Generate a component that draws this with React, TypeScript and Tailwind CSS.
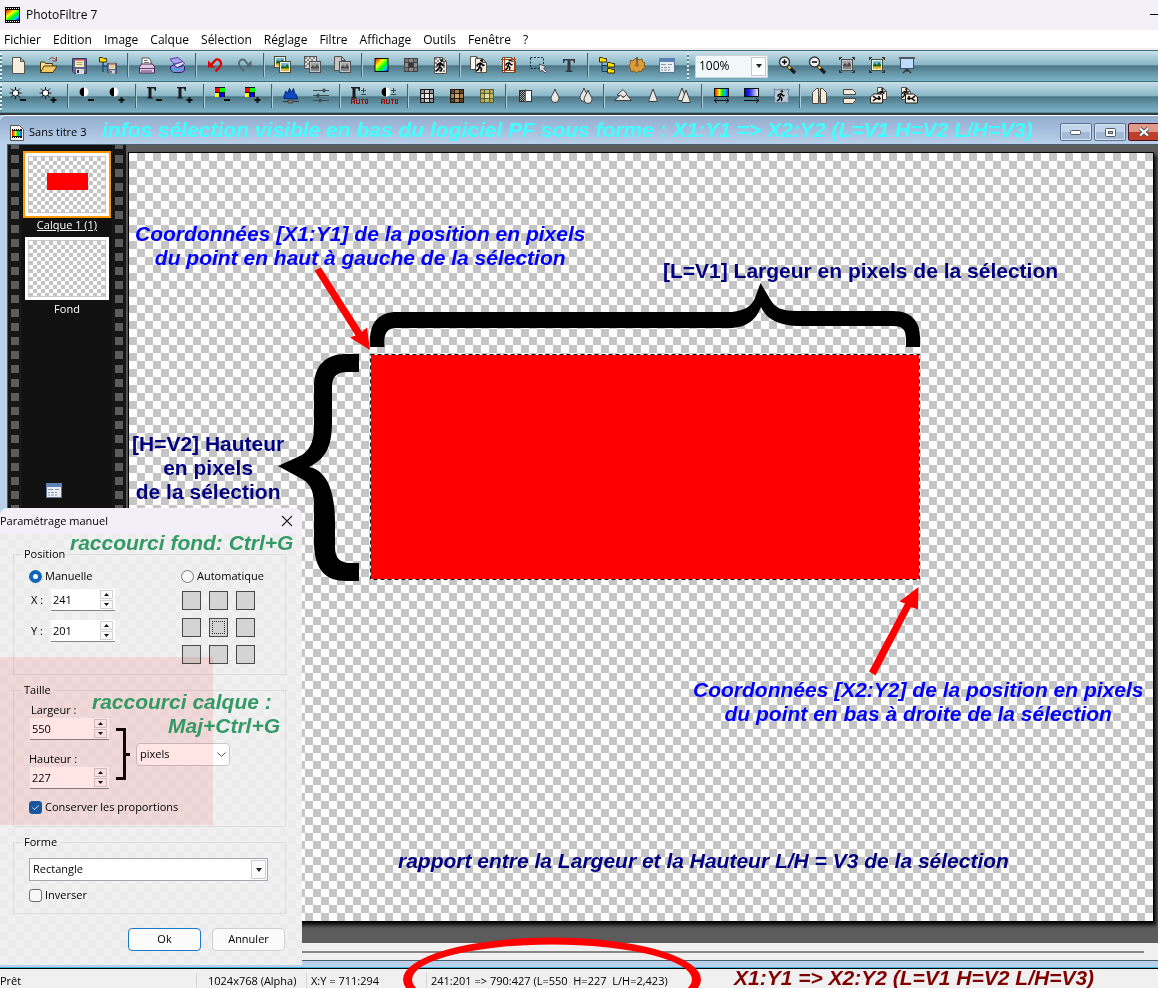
import { useState } from "react";
import type { ReactNode } from "react";

const UI = "font-['Open_Sans','Noto_Sans',sans-serif]";
const NOTE = "absolute whitespace-nowrap font-['Liberation_Sans',sans-serif] text-[21px] font-bold";

/* ---------- icon parts, all on a 20x20 grid ---------- */

const Page = ({ x = 3, y = 2, w = 12, h = 16, fill = "#f6efe0" }: { x?: number; y?: number; w?: number; h?: number; fill?: string }) => (
  <path transform="translate(0.5 0.5)" d={`M${x} ${y}h${w - 4}l4 4v${h - 4}h-${w}z M${x + w - 4} ${y}v4h4`} fill={fill} stroke="#5a554c" />
);

const Man = ({ x = 0, y = 0, s = 1 }: { x?: number; y?: number; s?: number }) => (
  <g transform={`translate(${x} ${y}) scale(${s})`} stroke="#000" strokeWidth="1.6" fill="none">
    <circle cx="6.5" cy="1.5" r="1.3" fill="#000" stroke="none" />
    <path d="M6 3.5L4.5 7.5L6.5 9.5L6 12.5M4.5 7.5L3.5 10.5L1 12M5.5 4L2.5 5.5L2 7.5M6 4L8 6.5L9.5 6" />
  </g>
);

const Photo = ({ x, y, gray }: { x: number; y: number; gray?: boolean }) => (
  <g transform={`translate(${x} ${y})`}>
    <path d="M0 0h12v12H0z" fill={gray ? "#4b4f50" : "#4a4a30"} />
    <path d="M1 1h10v10H1z" fill={gray ? "#c4c4c4" : "#f4f1dc"} />
    <path d="M2 2h8v5H2z" fill={gray ? "#a4a4a4" : "#6fbbe6"} />
    <path d="M2 8V6l2-2 2 2 2-3 2 3v2z" fill={gray ? "#4f4f4f" : "#1c6a18"} />
    <path d="M2 7.5h8V10H2z" fill={gray ? "#858585" : "#e3b93c"} />
  </g>
);

const Checks = ({ x, y, n, m }: { x: number; y: number; n: number; m: number }) => (
  <g fill="#8b8b8b">
    {Array.from({ length: n * m }, (_, i) => [i % n, Math.floor(i / n)])
      .filter(([a, b]) => (a + b) % 2 === 0)
      .map(([a, b]) => (
        <rect key={`${a}-${b}`} x={x + a * 2} y={y + b * 2} width="2" height="2" />
      ))}
  </g>
);

const Floppy = ({ x, y, s = 1 }: { x: number; y: number; s?: number }) => (
  <g transform={`translate(${x} ${y}) scale(${s})`}>
    <path d="M0.5 0.5h14v15h-12l-2-2z" fill="#66638e" stroke="#3a3858" />
    <rect x="3" y="1" width="9" height="8" fill="#f5eeb4" />
    <path d="M3 1h9v1.5H3z" fill="#c04a50" />
    <path d="M4.5 4.500h6M4.500 6.500h6" stroke="#a9a078" />
    <rect x="4" y="11" width="8" height="5" fill="#d8d8e0" />
    <rect x="5" y="12" width="2" height="3" fill="#333" />
  </g>
);

const GRID_STARTS = [0, 4, 9];
const GRID_SIZES = [3, 4, 3];

const Grid3 = ({ a, b, c, line = "#1a1a1a" }: { a: string; b: string; c: string; line?: string }) => (
  <g>
    <rect x="3" y="3" width="14" height="14" fill={line} />
    {[0, 1, 2, 3, 4, 5, 6, 7, 8].map((i) => {
      const col = i % 3;
      const row = Math.floor(i / 3);
      return (
        <rect
          key={i}
          x={4 + GRID_STARTS[col]}
          y={4 + GRID_STARTS[row]}
          width={GRID_SIZES[col]}
          height={GRID_SIZES[row]}
          fill={i === 4 ? c : i % 2 ? b : a}
        />
      );
    })}
  </g>
);

const Sun = () => (
  <g stroke="#111">
    <path d="M6.500 1v12M0.500 7h12M2 2.500l9 9M11 2.500l-9 9" />
    <circle cx="6.500" cy="7" r="3.200" fill="#fff" />
  </g>
);

const Half = () => (
  <g>
    <circle cx="7" cy="6" r="4.500" fill="#fff" />
    <path d="M7 1.500a4.500 4.500 0 0 0 0 9z" fill="#000" />
  </g>
);

const Gamma = () => <path d="M2 1h9v4h-1L9 2.500H6.500V11l1.500 1v.500H2V12l1.500-1V2.500L2 2z" fill="#1c1c1c" />;

const Quads = () => (
  <g>
    <path d="M2 1h10v10H2z" fill="#111" />
    <path d="M2 2h5v4H2z" fill="#f00" />
    <path d="M7 2h5v4H7z" fill="#0f0" />
    <path d="M2 7h4v4H2z" fill="#ff0" />
    <path d="M7 7h4v4H7z" fill="#00f" />
  </g>
);

const Minus = () => <path d="M11 14h6" stroke="#111" strokeWidth="2" />;
const Plus = () => <path d="M11.500 14h6M14.500 11v6" stroke="#111" strokeWidth="2" />;

const Auto = () => (
  <g>
    <path d="M14.500 2v5M12 4.500h5M12 8.500h5" stroke="#444" />
    <path d="M2.500 18v-4.500h3V18M2.500 16h3M7.500 13v4.500h3V13M12 13.500h3M13.500 13v5M16.500 13.500h2v4h-2z" fill="none" stroke="#8e1010" />
  </g>
);

const Drop = ({ x = 0, y = 0 }: { x?: number; y?: number }) => (
  <path transform={`translate(${x} ${y})`} d="M10 3C9 7 6 9.500 6 12.500a4 4 0 0 0 8 0C14 9.500 11 7 10 3z" fill="#e9e7e2" stroke="#3e3e3e" />
);

const Cone = ({ x = 0, y = 0 }: { x?: number; y?: number }) => (
  <path transform={`translate(${x} ${y})`} d="M10 3L6 13.500v2h8v-2z" fill="#e9e7e2" stroke="#3e3e3e" />
);

const Lens = ({ plus }: { plus?: boolean }) => (
  <g>
    <path d="M11 11l7 7" stroke="#1a1a1a" strokeWidth="3.200" />
    <path d="M11.500 11.500l2 2" stroke="#f2d23c" strokeWidth="2.400" />
    <circle cx="7.500" cy="7" r="5" fill="#eef3f4" stroke="#3a3a3a" strokeWidth="1.400" />
    <path d={plus ? "M5 7h5M7.500 4.500v5" : "M5 7h5"} stroke="#000" strokeWidth="1.500" />
  </g>
);

const Corners = ({ gray }: { gray?: boolean }) => (
  <g>
    <Photo x={4} y={4} gray={gray} />
    <path d="M2.500 5V2.500H5M2.500 2.500l2 2M15 2.500h2.500V5M17.500 2.500l-2 2M2.500 15v2.500H5M2.500 17.500l2-2M17.500 15v2.500H15M17.500 17.500l-2-2" fill="none" stroke="#333" />
  </g>
);

const FormIcon = () => (
  <g>
    <rect x="2.500" y="3.500" width="15" height="14" fill="#e9edf4" stroke="#5b7492" />
    <path d="M2 3h16v4H2z" fill="#5c83b5" />
    <path d="M4 9.500h5M11 9.500h4M4 12.500h2M7 12.500h3M11 12.500h2M4 15h2M7 15h3M11 15h2" stroke="#8a95a8" />
  </g>
);

const YellowTab = ({ x, y }: { x: number; y: number }) => (
  <path transform={`translate(${x} ${y})`} d="M0.500 0.500h3l1 1h3v3.500h-7z" fill="#ffe000" stroke="#3a3300" />
);

/* ---------- toolbars ---------- */

type Tool = { name: string; art: ReactNode } | null;

const FILE_TOOLS: Tool[] = [
  { name: "Nouveau", art: <Page /> },
  {
    name: "Ouvrir",
    art: (
      <g>
        <path d="M1.500 17V7h4l1 1.500h7V11" fill="#f7dc8c" stroke="#4c3b10" />
        <path d="M1.500 17.500L5 11h13l-4 6.500z" fill="#f3cb63" stroke="#4c3b10" />
        <path d="M10 5c2-3 5-3 7 0M17.500 2v4h-4" fill="none" stroke="#8c3a2c" />
      </g>
    ),
  },
  { name: "Enregistrer", art: <Floppy x={3} y={3} /> },
  {
    name: "Enregistrer sous",
    art: (
      <g>
        <path d="M4 6v11M4 11h4" stroke="#234a78" strokeWidth="1.500" />
        <YellowTab x={0} y={2} />
        <Floppy x={8} y={8} s={0.66} />
      </g>
    ),
  },
  null,
  {
    name: "Imprimer",
    art: (
      <g>
        <path d="M5 10V3h7l2 3v4z" fill="#fff" stroke="#555" />
        <path d="M7 5.500h4M7 7.500h5" stroke="#777" />
        <path d="M2.500 12l2-3h11l2 3v6h-15z" fill="#e3c8e2" stroke="#4b2c50" />
        <path d="M3 13.500h14M4 16h11" stroke="#693c70" />
      </g>
    ),
  },
  {
    name: "Numériser",
    art: (
      <g>
        <path d="M3 4l8-1.500L16 7l-9 2z" fill="#a9a5f2" stroke="#5a3aa0" />
        <path d="M6 10l10-3.500 1.500 2L10 13z" fill="#dfe4ff" stroke="#5a3aa0" />
        <path d="M3.500 11.500l3-1.500 4 2.500 6-2 1 1v4l-3 2h-8l-3-2.500z" fill="#8d84d6" stroke="#2d2566" />
        <path d="M5 14.500h9" stroke="#27b0e8" strokeWidth="1.500" />
      </g>
    ),
  },
  null,
  {
    name: "Annuler",
    art: (
      <g>
        <path d="M10.500 16.500L15 11.500C18 7.500 13.500 2 10 5.500L6 10" fill="none" stroke="#e00000" strokeWidth="2.200" />
        <path d="M3 5.500v7h7z" fill="#e00000" />
      </g>
    ),
  },
  {
    name: "Rétablir",
    art: (
      <g>
        <path d="M9 16.500L5 11.500C2 7.500 6.500 2 10 5.500L13 9.500" fill="none" stroke="#56666c" strokeWidth="1.800" />
        <path d="M16.500 5.500v6.500H10z" fill="#56666c" />
      </g>
    ),
  },
  null,
  { name: "Copier", art: <><Photo x={1} y={1} /><Photo x={6} y={6} /></> },
  { name: "Coller", art: <><rect x="1.500" y="1.500" width="12" height="12" fill="#ddd" stroke="#555" /><Checks x={2} y={2} n={5} m={5} /><Photo x={6} y={6} gray /></> },
  { name: "Coller dans", art: <><Page x={1} y={1} w={11} h={14} fill="#c3c5c5" /><Photo x={6} y={6} gray /></> },
  null,
  { name: "Mode RVB", art: <rect x="4" y="3.500" width="13" height="13" fill="url(#rainbow)" stroke="#111" /> },
  { name: "Mode indexé", art: <Grid3 a="#777" b="#8d8d8d" c="#353535" line="#444" /> },
  { name: "Transparence", art: <><Page fill="#eee" /><Checks x={4} y={3} n={5} m={7} /><Man x={4} y={4} /></> },
  null,
  { name: "Dupliquer", art: <><Page x={1} y={1} w={10} h={13} fill="#fff" /><Page x={6} y={3} w={11} h={14} /><Man x={6} y={4} /></> },
  { name: "Taille de l'image", art: <><Page x={3} y={2} w={13} h={15} /><Man x={5} y={4} s={0.9} /><path d="M2 4.500h15M2 15.500h15M5.500 2v16M15.500 2v16" stroke="#a34216" /></> },
  {
    name: "Sélection",
    art: (
      <g>
        <path d="M1.500 2.500h13v11h-13z" fill="none" stroke="#102a38" strokeDasharray="2 1.500" />
        <path d="M10 9l1 8 2-2 3 3 1.500-1.500-3-3 2-2z" fill="#ddd" stroke="#555" />
      </g>
    ),
  },
  {
    name: "Texte",
    art: <path d="M4 4h12v4h-1l-1-2.500h-2.500V15l2 1v1h-7v-1l2-1V5.500H6L5 8H4z" fill="#343b40" />,
  },
  null,
  {
    name: "Explorateur",
    art: (
      <g>
        <path d="M5 6v10.500h5M5 10.500h5" fill="none" stroke="#123c68" />
        <YellowTab x={2} y={2} />
        <YellowTab x={10} y={7} />
        <YellowTab x={10} y={13} />
      </g>
    ),
  },
  {
    name: "Automatisation",
    art: (
      <g>
        <path d="M10 3l2 2 3-1 .5 3 2.500 1-1 3 1.500 2-3 1-1 2.500-3-.5-2 2-2.500-2-3 .5-.5-3L2 11l1.500-2.500L3 5.500l3 .5 1.500-2z" fill="#d99e3b" stroke="#8a5a18" />
        <path d="M10 2v7" stroke="#555" strokeWidth="1.500" />
        <circle cx="10" cy="10" r="2" fill="#a8701f" />
      </g>
    ),
  },
  { name: "Préférences", art: <FormIcon /> },
];

const ZOOM_TOOLS: Tool[] = [
  { name: "Zoom +", art: <Lens plus /> },
  { name: "Zoom -", art: <Lens /> },
  { name: "Ajuster", art: <Corners gray /> },
  { name: "Taille réelle", art: <Corners /> },
  {
    name: "Plein écran",
    art: (
      <g>
        <path d="M10 14l-4 4M10 14l4 4M10 14v3" stroke="#333" strokeWidth="1.300" />
        <rect x="3.500" y="3.500" width="13" height="10" fill="#bfdcff" stroke="#3d4f63" />
        <path d="M2 3h16" stroke="#54585c" strokeWidth="2" />
      </g>
    ),
  },
];

const ADJUST_TOOLS: Tool[] = [
  { name: "Luminosité -", art: <><Sun /><Minus /></> },
  { name: "Luminosité +", art: <><Sun /><Plus /></> },
  null,
  { name: "Contraste -", art: <><Half /><Minus /></> },
  { name: "Contraste +", art: <><Half /><Plus /></> },
  null,
  { name: "Gamma -", art: <><Gamma /><Minus /></> },
  { name: "Gamma +", art: <><Gamma /><Plus /></> },
  null,
  { name: "Saturation -", art: <><Quads /><Minus /></> },
  { name: "Saturation +", art: <><Quads /><Plus /></> },
  null,
  {
    name: "Niveaux",
    art: (
      <g>
        <path d="M3 12.500V10l2-5 2 2 1.500-4.500 2 4 2-4 1 4.500 2 2 1 4z" fill="#0a48c8" stroke="#03256c" />
        <path d="M2 15.500h16" stroke="#333" />
        <path d="M7 14h5v3H7z" fill="#777" stroke="#333" strokeWidth="0.700" />
      </g>
    ),
  },
  {
    name: "Réglages",
    art: (
      <g stroke="#3f4d55" fill="#3f4d55">
        <path d="M2 4.500h16M2 9.500h16M2 14.500h16" />
        <path d="M12 3h2v3h-2zM6 8h2v3H6zM8 13h2v3H8z" strokeWidth="0.700" />
      </g>
    ),
  },
  null,
  { name: "Niveaux automatiques", art: <><Gamma /><Auto /></> },
  { name: "Contraste automatique", art: <><Half /><Auto /></> },
  null,
  { name: "Niveaux de gris", art: <Grid3 a="#8c8c8c" b="#cfcfcf" c="#eee" /> },
  { name: "Sépia", art: <Grid3 a="#5c4526" b="#a9824d" c="#d3aa6c" line="#20150a" /> },
  { name: "Vieille photo", art: <Grid3 a="#a9a45a" b="#bdbb6e" c="#e6e592" line="#5c5c30" /> },
  null,
  {
    name: "Estomper",
    art: (
      <g>
        <rect x="4.500" y="4.500" width="12" height="11" fill="#fff" stroke="#333" />
        <path d="M5 5h5v10H5z" fill="#aaa" />
        <path d="M5 5.500h5M6 6.500h5M5 7.500h5M6 8.500h5M5 9.500h5M6 10.500h5M5 11.500h5M6 12.500h5M5 13.500h5M6 14.500h5" stroke="#222" strokeDasharray="1 1" />
        <path d="M10.500 3v14" stroke="#a34a28" />
      </g>
    ),
  },
  { name: "Adoucir", art: <Drop /> },
  { name: "Adoucir plus", art: <><Drop x={-1} y={-1} /><Drop x={3} y={1} /></> },
  null,
  {
    name: "Relief",
    art: (
      <g fill="#e9e7e2" stroke="#3e3e3e">
        <path d="M4 9l6-5.500L14 8l-3 3z" />
        <path d="M1.500 14.500l6-5.500 3 2.500 3-3 5 6z" />
      </g>
    ),
  },
  { name: "Netteté", art: <Cone /> },
  { name: "Netteté plus", art: <><Cone x={-1} y={-1} /><Cone x={3} y={1} /></> },
  null,
  { name: "Dégradé", art: <><rect x="3.500" y="2.500" width="14" height="8" fill="url(#hues)" stroke="#111" /><path d="M3 14.500h15M6 12l-3 2.500 3 2.500M15 12l3 2.500-3 2.500" fill="none" stroke="#111" /></> },
  { name: "Dégradé bicolore", art: <><rect x="3.500" y="2.500" width="14" height="8" fill="url(#blues)" stroke="#111" /><path d="M3 14.500h15M15 12l3 2.500-3 2.500" fill="none" stroke="#111" /></> },
  { name: "Contour", art: <><path d="M3 3l3 1 4-1 4 1 4-1-1 4 1 3-1 3 1 4-4-1-4 1-3-1-4 1 1-4-1-3 1-3z" fill="#b9cad8" stroke="#6a8192" /><Man x={5} y={4} s={0.9} /></> },
  null,
  {
    name: "Symétrie horizontale",
    art: (
      <g fill="#f4eadb" stroke="#4a4640">
        <path d="M9.500 2.500v15h-6v-11l4-4z" />
        <path d="M11.500 2.500v15h6v-11l-4-4z" />
      </g>
    ),
  },
  {
    name: "Symétrie verticale",
    art: (
      <g fill="#f4eadb" stroke="#4a4640">
        <path d="M4.500 3.500h9l3 3v2h-12z" />
        <path d="M4.500 12.500h12v2l-3 3h-9z" />
      </g>
    ),
  },
  {
    name: "Rotation gauche",
    art: (
      <g>
        <Page x={8} y={1} w={9} h={12} />
        <Man x={8} y={2} s={0.800} />
        <path d="M1.500 11l3-3h9v9h-12z" fill="#f6efe0" stroke="#222" />
        <path d="M4 10l3 2.500h5M4 15l3-2.500M10 10v4" stroke="#000" strokeWidth="1.600" />
      </g>
    ),
  },
  {
    name: "Rotation droite",
    art: (
      <g>
        <Page x={2} y={1} w={9} h={12} />
        <Man x={2} y={2} s={0.800} />
        <path d="M6.500 8h8l4 3v6h-12z" fill="#f6efe0" stroke="#222" />
        <path d="M16 10l-3 2.500H8M16 15l-3-2.500M10 10v4" stroke="#000" strokeWidth="1.600" />
      </g>
    ),
  },
];

const MENUS = ["Fichier", "Edition", "Image", "Calque", "Sélection", "Réglage", "Filtre", "Affichage", "Outils", "Fenêtre", "?"];

function Grip() {
  return <div className="h-[27px] w-[2px] bg-[repeating-linear-gradient(#e4f2f7_0_2px,#55818f_2px_4px)]" />;
}

function ToolRow({ tools }: { tools: Tool[] }) {
  return (
    <div className="flex items-center pb-[2px]">
      {tools.map((tool, i) =>
        tool ? (
          <button key={i} title={tool.name} aria-label={tool.name} className="flex h-6 w-[30px] items-center justify-center hover:bg-white/25">
            <svg width="20" height="20" viewBox="0 0 20 20" fill="none">
              {tool.art}
            </svg>
          </button>
        ) : (
          <div key={i} className="flex w-2 justify-center">
            <div className="h-6 w-[2px] border-l border-[#3f6370] bg-[#a9ccd8]" />
          </div>
        )
      )}
    </div>
  );
}

const BAR =
  "flex h-[31px] items-center border-t border-[#426d7b] bg-[linear-gradient(#c9e0e8,#86b4c5_47%,#4b7585_49%,#5d8b9c_65%,#7db3c8)]";

/* ---------- dialog controls ---------- */

function Spinner({ id, value, onChange, className }: { id: string; value: number; onChange: (v: number) => void; className: string }) {
  return (
    <div className={`flex h-[22px] items-center border-b border-[#868686] bg-white pr-[2px] ${className}`}>
      <input
        id={id}
        value={value}
        onChange={(e) => onChange(Number(e.target.value) || 0)}
        className="min-w-0 flex-1 bg-transparent pl-[2px] text-[11px] leading-4 outline-none"
      />
      <div className="flex flex-col gap-px">
        <button aria-label="Plus" onClick={() => onChange(value + 1)} className="flex h-[9px] w-[13px] items-center justify-center border border-[#d0d0d0] bg-[#fafafa]">
          <svg width="5" height="3" viewBox="0 0 5 3"><path d="M0 3L2.500 0L5 3z" fill="#111" /></svg>
        </button>
        <button aria-label="Moins" onClick={() => onChange(value - 1)} className="flex h-[9px] w-[13px] items-center justify-center border border-[#d0d0d0] bg-[#fafafa]">
          <svg width="5" height="3" viewBox="0 0 5 3"><path d="M0 0L2.500 3L5 0z" fill="#111" /></svg>
        </button>
      </div>
    </div>
  );
}

function Tick({ label, checked, onChange }: { label: string; checked: boolean; onChange: (v: boolean) => void }) {
  return (
    <label className="flex items-center gap-[3px] leading-4">
      <span className="grid">
        <input
          type="checkbox"
          checked={checked}
          onChange={(e) => onChange(e.target.checked)}
          className="col-start-1 row-start-1 size-[13px] appearance-none rounded-[3px] border border-[#6e6e6e] bg-[#f8f8f8] checked:border-[#1a5fb0] checked:bg-[#1a5fb0]"
        />
        {checked && (
          <svg width="13" height="13" viewBox="0 0 13 13" className="pointer-events-none col-start-1 row-start-1">
            <path d="M3.500 6.500l2 2.200L9.500 4.500" fill="none" stroke="#fff" />
          </svg>
        )}
      </span>
      {label}
    </label>
  );
}

function Radio({ label, checked, onChange }: { label: string; checked: boolean; onChange: () => void }) {
  return (
    <label className="flex items-center gap-[3px] leading-4">
      <input
        type="radio"
        name="mode"
        checked={checked}
        onChange={onChange}
        className="size-[13px] appearance-none rounded-full border border-[#777] bg-[#f8f8f8] checked:border-4 checked:border-[#0f66b8] checked:bg-white"
      />
      {label}
    </label>
  );
}

function SelectionDialog() {
  const [mode, setMode] = useState("manual");
  const [x, setX] = useState(241);
  const [y, setY] = useState(201);
  const [width, setWidth] = useState(550);
  const [height, setHeight] = useState(227);
  const [keep, setKeep] = useState(true);
  const [invert, setInvert] = useState(false);

  return (
    <div
      role="dialog"
      aria-label="Paramétrage manuel"
      className="absolute top-[508px] left-0 h-[457px] w-[302px] overflow-hidden rounded-t-lg bg-[#f0f0f0] bg-[repeating-conic-gradient(#ececec_0_25%,#f1f1f1_0_50%)] bg-[length:16px_16px]"
    >
      <div className="flex h-[26px] items-center justify-between bg-[#f3eff8] pr-[9px]">
        <span>Paramétrage manuel</span>
        <button aria-label="Fermer">
          <svg width="12" height="12" viewBox="0 0 12 12"><path d="M1 1l10 10M11 1L1 11" stroke="#222" strokeWidth="1.100" /></svg>
        </button>
      </div>

      <div className="pt-3 pr-4 pl-[13px]">
        <fieldset className="flex h-[129px] border border-[#dcdcdc] pl-[15px]">
          <legend className="-ml-2 px-[3px] leading-4">Position</legend>
          <div className="w-[152px] pt-[6px]">
            <Radio label="Manuelle" checked={mode === "manual"} onChange={() => setMode("manual")} />
            <div className="mt-[5px] flex items-center">
              <label htmlFor="pos-x" className="w-[22px] pl-[2px]">X :</label>
              <Spinner id="pos-x" value={x} onChange={setX} className="w-16" />
            </div>
            <div className="mt-[9px] flex items-center">
              <label htmlFor="pos-y" className="w-[22px] pl-[2px]">Y :</label>
              <Spinner id="pos-y" value={y} onChange={setY} className="w-16" />
            </div>
          </div>
          <div className="pt-[6px]">
            <Radio label="Automatique" checked={mode === "auto"} onChange={() => setMode("auto")} />
            <div className="mt-[7px] ml-px grid w-[73px] grid-cols-3 gap-2">
              {Array.from({ length: 9 }, (_, i) => (
                <button key={i} aria-label={`Ancrage ${i + 1}`} className="flex size-[19px] items-center justify-center border border-[#4a4a4a] bg-[#d4d4d4]">
                  {i === 4 && <span className="size-[13px] border border-dotted border-[#333]" />}
                </button>
              ))}
            </div>
          </div>
        </fieldset>

        <fieldset className="mt-[7px] h-[145px] border border-[#dcdcdc] pl-[15px]">
          <legend className="-ml-2 px-[3px] leading-4">Taille</legend>
          <div className="flex pt-1">
            <div className="flex w-20 flex-col leading-4">
              <label htmlFor="size-w" className="pl-[2px]">Largeur :</label>
              <Spinner id="size-w" value={width} onChange={setWidth} className="ml-px w-[79px]" />
              <label htmlFor="size-h" className="mt-[11px]">Hauteur :</label>
              <Spinner id="size-h" value={height} onChange={setHeight} className="ml-px w-[79px]" />
            </div>
            <div className="ml-[7px] flex items-center gap-[6px] pt-[18px]">
              <svg width="14" height="54" viewBox="0 0 14 54" fill="none">
                <path d="M0 1.500h8.500v49H0M9 26.500h5" stroke="#140404" strokeWidth="3" />
              </svg>
              <div className="grid items-center">
                <select aria-label="Unité" className="col-start-1 row-start-1 h-[23px] w-[94px] appearance-none rounded-sm border border-[#c8c8c8] bg-white pl-[3px]">
                  <option>pixels</option>
                  <option>cm</option>
                </select>
                <svg width="9" height="5" viewBox="0 0 9 5" fill="none" className="pointer-events-none col-start-1 row-start-1 mr-1 justify-self-end">
                  <path d="M0.500 0.500l4 4 4-4" stroke="#555" />
                </svg>
              </div>
            </div>
          </div>
          <div className="mt-[10px]">
            <Tick label="Conserver les proportions" checked={keep} onChange={setKeep} />
          </div>
        </fieldset>

        <fieldset className="mt-[7px] h-20 border border-[#dcdcdc] px-[15px]">
          <legend className="-ml-2 px-[3px] leading-4">Forme</legend>
          <div className="grid w-[239px] items-center pt-2">
            <select aria-label="Forme" className="col-start-1 row-start-1 h-[23px] w-full appearance-none border border-[#a5a5ad] bg-white pl-[3px]">
              <option>Rectangle</option>
              <option>Ellipse</option>
            </select>
            <span className="pointer-events-none col-start-1 row-start-1 mr-[2px] flex h-[19px] w-[15px] items-center justify-center justify-self-end border border-[#d0d0d0] bg-[#fafafa]">
              <svg width="6" height="4" viewBox="0 0 6 4"><path d="M0 0h6L3 4z" fill="#222" /></svg>
            </span>
          </div>
          <div className="mt-[6px]">
            <Tick label="Inverser" checked={invert} onChange={setInvert} />
          </div>
        </fieldset>

        <div className="mt-[14px] flex justify-end gap-[11px] pr-px">
          <button className="h-[23px] w-[73px] rounded-[4px] border border-[#1b7ac8] bg-[#fbfbfb]">Ok</button>
          <button className="h-[23px] w-[73px] rounded-[4px] border border-[#d0d0d0] bg-[#fbfbfb]">Annuler</button>
        </div>
      </div>

      {/* selection seen through the dialog */}
      <div className="pointer-events-none absolute top-[149px] left-0 h-[168px] w-[213px] bg-[#ffe6e5] mix-blend-multiply" />
      <p className={`${NOTE} pointer-events-none top-[23px] left-[70px] leading-6 text-[#339966] italic`}>raccourci fond: Ctrl+G</p>
      <p className={`${NOTE} pointer-events-none top-[182px] left-[92px] leading-6 text-[#339966] italic`}>raccourci calque :</p>
      <p className={`${NOTE} pointer-events-none top-[206px] left-[168px] leading-6 text-[#339966] italic`}>Maj+Ctrl+G</p>
    </div>
  );
}

/* ---------- document window ---------- */

function Perforations() {
  return (
    <div className="flex w-[14px] justify-center bg-[#161616]">
      <div className="w-[8px] bg-[repeating-linear-gradient(#5c5c5c_0_4px,#161616_4px_10px,#5c5c5c_10px_14px)]" />
    </div>
  );
}

function LayerStrip() {
  const checks = "flex flex-1 border border-[#c8c8c8] bg-white bg-[repeating-conic-gradient(#c4c4c4_0_25%,#fff_0_50%)] bg-[length:8px_8px]";
  return (
    <div className="flex w-[118px] shrink-0 bg-[#111]">
      <Perforations />
      <div className="flex flex-1 flex-col items-center pt-[6px] text-white">
        <button className="flex h-[67px] w-[88px] border-2 border-[#ff9900] bg-white p-[3px]">
          <span className={`${checks} self-stretch pt-4 pl-[18px]`}>
            <span className="h-[17px] w-[41px] bg-[#ff0000]" />
          </span>
        </button>
        <span className="leading-[14px] underline">Calque 1 (1)</span>
        <button className="mt-[5px] flex h-[63px] w-[84px] bg-white p-[3px]">
          <span className={`${checks} self-stretch`} />
        </button>
        <span className="mt-px leading-4">Fond</span>
        <button aria-label="Options du calque" className="mt-[163px] -ml-[26px]">
          <svg width="20" height="20" viewBox="0 0 20 20" fill="none"><FormIcon /></svg>
        </button>
      </div>
      <Perforations />
    </div>
  );
}

function Canvas() {
  return (
    <div className="relative box-content h-[768px] w-[1024px] shrink-0 border border-black bg-white bg-[repeating-conic-gradient(#c4c4c4_0_25%,#fff_0_50%)] bg-[length:16px_16px] shadow-[2px_3px_4px_#000]">
      <svg width="1024" height="768" viewBox="129 153 1024 768" className="absolute inset-0">
        <rect x="371" y="355" width="549" height="225" fill="#f00" />
        <rect x="370.500" y="354.500" width="549" height="225" fill="none" stroke="#fff" />
        <rect x="370.500" y="354.500" width="549" height="225" fill="none" stroke="#111" strokeDasharray="4 3" />
        <path d="M370 347V341C370 322 379 312 397 312H732C745 310 751 307 755 298L760.500 283L770 299C775 308 782 311 797 311H893C912 311 920 322 920 337V347H906V339C906 330 903 326 893 326H797C776 325 766 318 761 307C756 320 747 327 732 328H397C388 328 384.500 332 384.500 341V347Z" />
        <path d="M359 354H346C325 354 314 366 314 387V425C314 440 311 449 302 455L278 466L302 479C312 485 314 493 314 508V545C315 570 326 581 346 581H359V563H350C340 563 335 558 335 547V522C335 490 326 470 309 467C325 459 332 448 332 422V387C332 376 337 372 348 372H359Z" />
        <path d="M314.500 270.500L321 267.500L362 332L367 327.500L370 350L350 337.500L355.500 335.500Z" fill="#f00" />
        <path d="M869 671.500L875.500 675.500L911 607L918 609.500L918.500 587L899.500 601.500L905 603.500Z" fill="#f00" />
      </svg>
      <p className={`${NOTE} top-[69px] left-[6px] text-center leading-6 text-[#0000ff] italic`}>
        Coordonnées [X1:Y1] de la position en pixels
        <br />
        du point en haut à gauche de la sélection
      </p>
      <p className={`${NOTE} top-[106px] left-[534px] leading-6 text-[#000080]`}>[L=V1] Largeur en pixels de la sélection</p>
      <p className={`${NOTE} top-[279px] left-[3px] text-center leading-6 text-[#000080]`}>
        [H=V2] Hauteur
        <br />
        en pixels
        <br />
        de la sélection
      </p>
      <p className={`${NOTE} top-[525px] left-[564px] text-center leading-6 text-[#0000ff] italic`}>
        Coordonnées [X2:Y2] de la position en pixels
        <br />
        du point en bas à droite de la sélection
      </p>
      <p className={`${NOTE} top-[696px] left-[269px] leading-6 text-[#000080] italic`}>
        rapport entre la Largeur et la Hauteur L/H = V3 de la sélection
      </p>
    </div>
  );
}

function DocumentWindow() {
  const frameButton = "flex h-[18px] w-8 items-center justify-center rounded-[2px] border border-[#5d7290] shadow-[inset_0_0_0_1px_#d6e3f1]";
  return (
    <section className="flex min-h-0 flex-1 flex-col overflow-hidden bg-[#b9d1ea]">
      <div className="relative flex h-[29px] shrink-0 items-center justify-between rounded-tl-md border-t border-white bg-[linear-gradient(#94add0,#b9d0ea)] pl-[10px]">
        <div className="flex items-center gap-[5px] pt-[5px]">
          <svg width="14" height="16" viewBox="0 0 14 16">
            <path d="M0.500 0.500h9l4 4v11h-13z" fill="#f7f2ea" stroke="#555" />
            <path d="M2 4h10v9H2z" fill="#111" />
            <path d="M3 4.500h8M3 12.500h8" stroke="#fff" strokeDasharray="1 1" />
            <path d="M2 6h10v5H2z" fill="url(#hues)" />
          </svg>
          <span>Sans titre 3</span>
        </div>
        <div className="-mr-[2px] flex gap-[2px] pt-[4px]">
          <button aria-label="Réduire" className={`${frameButton} bg-[linear-gradient(#c3d5ea_50%,#a3bbd7_50%)]`}>
            <svg width="12" height="5" viewBox="0 0 12 5"><rect x="0.500" y="0.500" width="10" height="4" rx="1" fill="#fff" stroke="#555b66" /></svg>
          </button>
          <button aria-label="Agrandir" className={`${frameButton} bg-[linear-gradient(#c3d5ea_50%,#a3bbd7_50%)]`}>
            <svg width="11" height="9" viewBox="0 0 11 9"><rect x="0.500" y="0.500" width="10" height="8" rx="1" fill="#fff" stroke="#555b66" /><rect x="3.500" y="3.500" width="4" height="2" fill="#9db6d3" stroke="#555b66" /></svg>
          </button>
          <button aria-label="Fermer" className="flex h-[18px] w-8 items-center justify-center rounded-[2px] border border-[#4a1222] bg-[linear-gradient(#e09a8c_50%,#bf3f28_50%)]">
            <svg width="12" height="10" viewBox="0 0 12 10"><path d="M2 1.500l8 7M10 1.500l-8 7" stroke="#4d5260" strokeWidth="4" /><path d="M2 1.500l8 7M10 1.500l-8 7" stroke="#fff" strokeWidth="2.200" /></svg>
          </button>
        </div>
        <p className={`${NOTE} top-[2px] left-[102px] leading-6 text-[#40ffff] italic`}>
          infos sélection visible en bas du logiciel PF sous forme : X1:Y1 =&gt; X2:Y2 (L=V1 H=V2 L/H=V3)
        </p>
      </div>

      <div className="ml-[7px] flex min-h-0 flex-1 border-y border-l border-[#44606c]">
        <LayerStrip />
        <div className="flex min-w-0 flex-1 flex-col">
          <div className="min-h-0 flex-1 overflow-hidden bg-[#5c5c5c] pt-[7px] pl-[2px]">
            <Canvas />
          </div>
          <div className="flex h-[17px] shrink-0 items-center bg-[#f0f0f0] pr-[14px]">
            <div className="h-[2px] flex-1 bg-[#868686]" />
          </div>
        </div>
      </div>
      <div className="h-[7px] shrink-0 border-b border-[#3fb4d8]" />
    </section>
  );
}

export default function App() {
  const [zoom, setZoom] = useState("100%");

  return (
    <div className={`relative flex h-screen flex-col overflow-hidden bg-[#f0f0f0] text-[11px] text-black ${UI}`}>
      <svg width="0" height="0" className="absolute">
        <defs>
          <linearGradient id="rainbow" x1="0" y1="0" x2="1" y2="1">
            <stop offset="0" stopColor="#f00" />
            <stop offset="0.350" stopColor="#ff0" />
            <stop offset="0.600" stopColor="#0f0" />
            <stop offset="0.800" stopColor="#0cf" />
            <stop offset="1" stopColor="#00f" />
          </linearGradient>
          <linearGradient id="hues">
            <stop offset="0" stopColor="#f00" />
            <stop offset="0.350" stopColor="#ff0" />
            <stop offset="0.550" stopColor="#0e0" />
            <stop offset="0.750" stopColor="#0bf" />
            <stop offset="1" stopColor="#51f" />
          </linearGradient>
          <linearGradient id="blues">
            <stop offset="0" stopColor="#0000a0" />
            <stop offset="0.350" stopColor="#22f" />
            <stop offset="1" stopColor="#fff" />
          </linearGradient>
        </defs>
      </svg>

      <header className="flex h-[30px] shrink-0 items-center gap-[6px] bg-[#f3f0f7] pl-[5px] text-[12px]">
        <svg width="15" height="16" viewBox="0 0 15 16">
          <path d="M0 0h15v16H0z" fill="#000" />
          <path d="M1 1.500h14M1 14.500h14" stroke="#fff" strokeDasharray="1 1" />
          <path d="M1 3h13v10H1z" fill="url(#rainbow)" />
        </svg>
        <h1>PhotoFiltre 7</h1>
        <button aria-label="Réduire" className="-mr-[2px] ml-auto h-4">
          <svg width="10" height="2" viewBox="0 0 10 2"><path d="M0 0h10v1H0z" /></svg>
        </button>
      </header>

      <nav className="flex h-5 shrink-0 items-center gap-3 border-b-2 border-[#f0f0f0] bg-white pt-[2px] pl-1 text-[12px]">
        {MENUS.map((m) => (
          <button key={m} className="leading-4">{m}</button>
        ))}
      </nav>

      <div className={`${BAR} shrink-0`}>
        <div className="flex w-[4px]">
          <Grip />
        </div>
        <ToolRow tools={FILE_TOOLS} />
        <div className="flex w-[13px] pl-[5px]">
          <Grip />
        </div>
        <div className="mr-1 grid items-center">
          <select
            aria-label="Zoom"
            value={zoom}
            onChange={(e) => setZoom(e.target.value)}
            className="col-start-1 row-start-1 h-[23px] w-[73px] appearance-none border border-[#c9d3d8] bg-[#f1f8fa] pl-[3px] text-[12px]"
          >
            <option>50%</option>
            <option>100%</option>
            <option>200%</option>
          </select>
          <span className="pointer-events-none col-start-1 row-start-1 mr-[2px] flex h-[19px] w-[15px] items-center justify-center justify-self-end border border-[#c8c8c8] bg-white">
            <svg width="6" height="4" viewBox="0 0 6 4"><path d="M0 0h6L3 4z" fill="#222" /></svg>
          </span>
        </div>
        <ToolRow tools={ZOOM_TOOLS} />
      </div>
      <div className={`${BAR} shrink-0`}>
        <div className="flex w-[4px]">
          <Grip />
        </div>
        <ToolRow tools={ADJUST_TOOLS} />
      </div>
      <div className="h-[3px] shrink-0 border-t border-[#5b8a9b] bg-[#333a3e]" />

      <DocumentWindow />

      <footer className="relative flex h-5 shrink-0 border-t border-black bg-[#f0f0f0] pt-1 leading-[15px]">
        <span className="w-[196px]">Prêt</span>
        <span className="w-[110px] border-l border-[#d4d4d4] pl-[11px]">1024x768 (Alpha)</span>
        <span className="w-[120px] border-l border-[#d4d4d4] pl-1">X:Y = 711:294</span>
        <span className="border-l border-[#d4d4d4] pl-1 whitespace-pre">241:201 =&gt; 790:427 (L=550  H=227  L/H=2,423)</span>
        <p className={`${NOTE} top-[-1px] left-[734px] leading-5 text-[#800000] italic`}>X1:Y1 =&gt; X2:Y2 (L=V1 H=V2 L/H=V3)</p>
      </footer>

      <svg width="298" height="51" viewBox="403 937 298 51" className="pointer-events-none absolute bottom-0 left-[403px]">
        <path fillRule="evenodd" fill="#f00" d="M403 979.500a149 42 0 0 1 298 0a149 42 0 0 1-298 0zM412 979.500a140 35 0 0 0 280 0a140 35 0 0 0-280 0z" />
      </svg>

      <SelectionDialog />
    </div>
  );
}
